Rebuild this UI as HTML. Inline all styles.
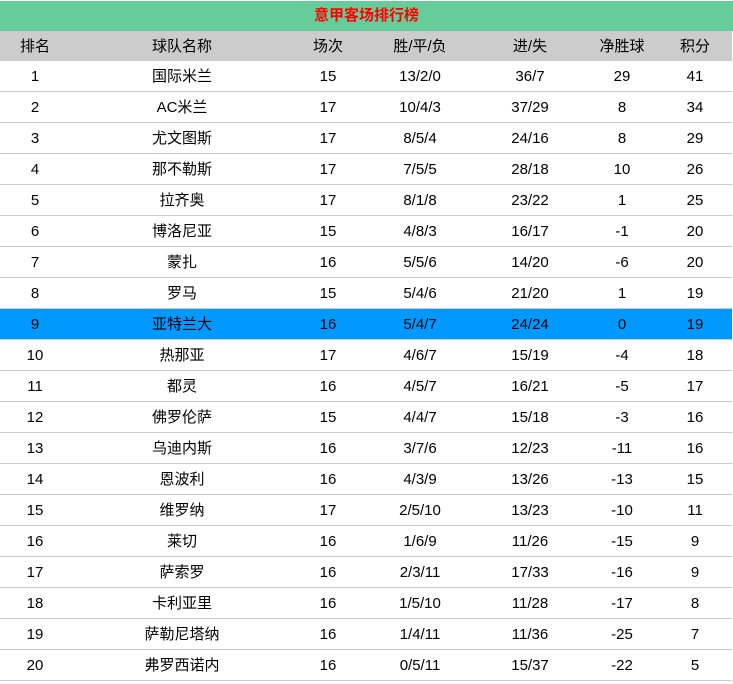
<!DOCTYPE html>
<html><head><meta charset="utf-8"><style>
body{margin:0;width:733px;height:683px;background:#fff;font-family:"Liberation Sans","Noto Sans CJK SC",sans-serif;font-size:15px;color:#000;overflow:hidden}
.t{height:30px;margin-top:1px;background:#66cc99;color:#f00;font-weight:bold;text-align:center;line-height:30px;font-size:15px}
.r{position:relative;height:30px;border-bottom:1px solid #ccc;line-height:30px;width:732px}
.h{background:#ccc;border-bottom:none;height:30px}
.hl{background:#0099ff}
.r span{position:absolute;top:1px;transform:translateX(-50%);white-space:nowrap}
</style></head><body>
<div class="t">意甲客场排行榜</div>
<div id="c"></div>
<script>
var d=[["排名","球队名称","场次","胜/平/负","进/失","净胜球","积分"],
[1,"国际米兰",15,"13/2/0","36/7",29,41],[2,"AC米兰",17,"10/4/3","37/29",8,34],[3,"尤文图斯",17,"8/5/4","24/16",8,29],[4,"那不勒斯",17,"7/5/5","28/18",10,26],[5,"拉齐奥",17,"8/1/8","23/22",1,25],[6,"博洛尼亚",15,"4/8/3","16/17",-1,20],[7,"蒙扎",16,"5/5/6","14/20",-6,20],[8,"罗马",15,"5/4/6","21/20",1,19],[9,"亚特兰大",16,"5/4/7","24/24",0,19],[10,"热那亚",17,"4/6/7","15/19",-4,18],[11,"都灵",16,"4/5/7","16/21",-5,17],[12,"佛罗伦萨",15,"4/4/7","15/18",-3,16],[13,"乌迪内斯",16,"3/7/6","12/23",-11,16],[14,"恩波利",16,"4/3/9","13/26",-13,15],[15,"维罗纳",17,"2/5/10","13/23",-10,11],[16,"莱切",16,"1/6/9","11/26",-15,9],[17,"萨索罗",16,"2/3/11","17/33",-16,9],[18,"卡利亚里",16,"1/5/10","11/28",-17,8],[19,"萨勒尼塔纳",16,"1/4/11","11/36",-25,7],[20,"弗罗西诺内",16,"0/5/11","15/37",-22,5]];
var x=[35,182,328,420,530,622,695],h="";
d.forEach(function(r,i){h+='<div class="r'+(i==0?' h':'')+(i==9?' hl':'')+'">';r.forEach(function(v,j){h+='<span style="left:'+x[j]+'px">'+v+'</span>'});h+='</div>'});
document.getElementById('c').innerHTML=h;
</script>
</body></html>
